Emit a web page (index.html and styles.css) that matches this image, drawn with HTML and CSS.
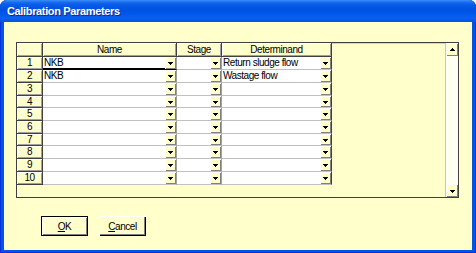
FILE: index.html
```html
<!doctype html>
<html lang="en">
<head>
<meta charset="UTF-8">
<title>Calibration Parameters</title>
<link rel="stylesheet" href="styles.css">
</head>
<body>
	<div class="window">
		<div class="titlebar"><span class="title">Calibration Parameters</span></div>
		<div class="client">
			<div class="frame">
				<div class="sheet">
					<div class="table">
						<div class="hd"></div>
						<div class="hd">Name</div>
						<div class="hd">Stage</div>
						<div class="hd">Determinand</div>

						<div class="rn">1</div>
						<div class="cell focus"><span class="val">NKB</span><span class="drop"></span></div>
						<div class="cell"><span class="val"></span><span class="drop"></span></div>
						<div class="cell"><span class="val">Return sludge flow</span><span class="drop"></span></div>

						<div class="rn">2</div>
						<div class="cell"><span class="val">NKB</span><span class="drop"></span></div>
						<div class="cell"><span class="val"></span><span class="drop"></span></div>
						<div class="cell"><span class="val">Wastage flow</span><span class="drop"></span></div>

						<div class="rn">3</div>
						<div class="cell"><span class="val"></span><span class="drop"></span></div>
						<div class="cell"><span class="val"></span><span class="drop"></span></div>
						<div class="cell"><span class="val"></span><span class="drop"></span></div>

						<div class="rn">4</div>
						<div class="cell"><span class="val"></span><span class="drop"></span></div>
						<div class="cell"><span class="val"></span><span class="drop"></span></div>
						<div class="cell"><span class="val"></span><span class="drop"></span></div>

						<div class="rn">5</div>
						<div class="cell"><span class="val"></span><span class="drop"></span></div>
						<div class="cell"><span class="val"></span><span class="drop"></span></div>
						<div class="cell"><span class="val"></span><span class="drop"></span></div>

						<div class="rn">6</div>
						<div class="cell"><span class="val"></span><span class="drop"></span></div>
						<div class="cell"><span class="val"></span><span class="drop"></span></div>
						<div class="cell"><span class="val"></span><span class="drop"></span></div>

						<div class="rn">7</div>
						<div class="cell"><span class="val"></span><span class="drop"></span></div>
						<div class="cell"><span class="val"></span><span class="drop"></span></div>
						<div class="cell"><span class="val"></span><span class="drop"></span></div>

						<div class="rn">8</div>
						<div class="cell"><span class="val"></span><span class="drop"></span></div>
						<div class="cell"><span class="val"></span><span class="drop"></span></div>
						<div class="cell"><span class="val"></span><span class="drop"></span></div>

						<div class="rn">9</div>
						<div class="cell"><span class="val"></span><span class="drop"></span></div>
						<div class="cell"><span class="val"></span><span class="drop"></span></div>
						<div class="cell"><span class="val"></span><span class="drop"></span></div>

						<div class="rn">10</div>
						<div class="cell"><span class="val"></span><span class="drop"></span></div>
						<div class="cell"><span class="val"></span><span class="drop"></span></div>
						<div class="cell"><span class="val"></span><span class="drop"></span></div>
					</div>
					<div class="rest"></div>
				</div>
				<div class="scrollbar">
					<div class="sbtn up"></div>
					<div class="track"></div>
					<div class="sbtn down"></div>
				</div>
			</div>
			<div class="buttons">
				<button class="btn default"><u>O</u>K</button>
				<button class="btn"><u>C</u>ancel</button>
			</div>
		</div>
	</div>
</body>
</html>
```

FILE: styles.css
```css
body{
	margin:0;
	background:#fff;
	font-family:"Liberation Sans",Arial,sans-serif;
	font-size:10px;
	letter-spacing:-0.45px;
	color:#000;
}
.window{
	width:476px;
	height:253px;
	display:flex;
	flex-direction:column;
	background:#0055e5;
	border-radius:7px 7px 0 0;
	box-shadow:inset 1px 0 #0831d9, inset -1px 0 #0831d9, inset 0 -1px #0831d9;
	overflow:hidden;
}
.titlebar{
	height:22px;
	flex:none;
	display:flex;
	align-items:center;
	padding:0 0 1px 7px;
	box-sizing:border-box;
	background:linear-gradient(to bottom,#3d8df7 0,#1d6ff2 2px,#0a5fea 4px,#0052e0 9px,#0055e6 13px,#0a60f0 18px,#0552dd 22px);
}
.title{
	color:#fff;
	font-weight:bold;
	font-size:11px;
	letter-spacing:-0.35px;
	text-shadow:1px 1px #0a2a8a;
}
.client{
	flex:1;
	margin:0 4px 3px 4px;
	background:#ffffcc;
	padding:20px 13px 0 12px;
}
.frame{
	height:156px;
	border:1px solid #404040;
	box-sizing:border-box;
	display:flex;
}
.sheet{
	flex:1;
	display:flex;
	align-items:flex-start;
	background:#ffffcc;
}
.table{
	display:grid;
	grid-template-columns:26px 134px 45px 110px;
	grid-template-rows:14px 13px 13px 13px 12px 13px 13px 12px 13px 13px 13px;
}
.hd, .rn{
	background:#ffffcc;
	border-right:1px solid #404040;
	border-bottom:1px solid #404040;
	box-shadow:inset 1px 1px #fff, inset -1px -1px #a0a0a0;
	text-align:center;
	line-height:12px;
}
.hd{
	line-height:13px;
}
.cell{
	display:flex;
	background:#fff;
	border-right:1px solid #a0a0a0;
	border-bottom:1px solid #c0c0c0;
	line-height:12px;
}
.cell:nth-child(4n){
	border-right-color:#404040;
}
.val{
	flex:1;
	padding-left:1px;
	white-space:nowrap;
	overflow:hidden;
}
.focus .val{
	box-shadow:inset 0 -1px #000;
}
.focus{
	border-bottom-color:#000;
}
.drop, .sbtn{
	width:11px;
	flex:none;
	background:#ffffcc;
	box-shadow:inset 1px 1px #fff, inset -1px -1px #808080;
	display:flex;
	align-items:center;
	justify-content:center;
}
.drop::after, .sbtn.down::after{
	content:"";
	width:5px;
	height:3px;
	margin-top:1px;
	background:
		linear-gradient(#000,#000) 0 0/5px 1px no-repeat,
		linear-gradient(#000,#000) 1px 1px/3px 1px no-repeat,
		linear-gradient(#000,#000) 2px 2px/1px 1px no-repeat;
}
.sbtn.up::after{
	content:"";
	width:5px;
	height:3px;
	background:
		linear-gradient(#000,#000) 2px 0/1px 1px no-repeat,
		linear-gradient(#000,#000) 1px 1px/3px 1px no-repeat,
		linear-gradient(#000,#000) 0 2px/5px 1px no-repeat;
}
.rest{
	flex:1;
	height:0;
	border-top:1px solid #f2c4c4;
}
.scrollbar{
	width:13px;
	display:flex;
	flex-direction:column;
	border-left:1px solid #c8c8b0;
	box-sizing:border-box;
}
.sbtn{
	width:auto;
	height:13px;
	box-shadow:inset 1px 1px #fff, inset -1px -1px #808080, inset -2px -2px #ffffcc;
}
.track{
	flex:1;
	background:#fffff2;
}
.buttons{
	display:flex;
	gap:11px;
	margin:18px 0 0 25px;
}
.btn{
	width:47px;
	height:20px;
	padding:0;
	font:inherit;
	letter-spacing:inherit;
	color:#000;
	background:#ffffcc;
	border:none;
	box-shadow:inset 1px 1px #fff, inset -1px -1px #000, inset -2px -2px #808080;
}
.btn.default{
	box-shadow:inset 0 0 0 1px #000, inset 2px 2px #fff, inset -2px -2px #808080;
}
```
